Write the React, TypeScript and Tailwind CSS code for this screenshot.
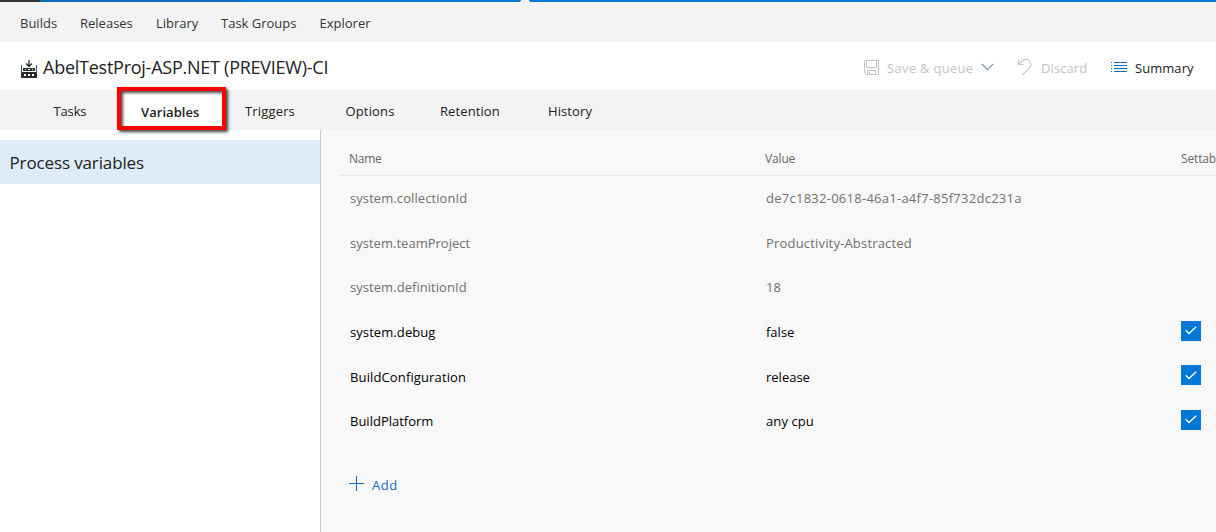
type Label = { text: string; className: string };

const hubs: Label[] = [
  { text: "Builds", className: "w-[60px]" },
  { text: "Releases", className: "w-[76px]" },
  { text: "Library", className: "w-[65px]" },
  { text: "Task Groups", className: "w-[98.5px]" },
  { text: "Explorer", className: "" },
];

const tabs: Label[] = [
  { text: "Tasks", className: "w-[87.5px] tracking-[-0.15px]" },
  { text: "Variables", className: "w-[104px] font-semibold tracking-[0.05px] pt-px" },
  { text: "Triggers", className: "w-[100.5px] tracking-[0.16px]" },
  { text: "Options", className: "w-[94.5px] tracking-[0.15px]" },
  { text: "Retention", className: "w-[108px] tracking-[0.1px]" },
  { text: "History", className: "tracking-[0.1px]" },
];

type Variable = { name: Label; value: Label; editable: boolean };

const variables: Variable[] = [
  {
    name: { text: "system.collectionId", className: "tracking-[0.08px]" },
    value: { text: "de7c1832-0618-46a1-a4f7-85f732dc231a", className: "tracking-[0.26px]" },
    editable: false,
  },
  {
    name: { text: "system.teamProject", className: "tracking-[0.02px]" },
    value: { text: "Productivity-Abstracted", className: "tracking-[0.18px]" },
    editable: false,
  },
  {
    name: { text: "system.definitionId", className: "tracking-[0.05px]" },
    value: { text: "18", className: "" },
    editable: false,
  },
  {
    name: { text: "system.debug", className: "tracking-[0.08px]" },
    value: { text: "false", className: "" },
    editable: true,
  },
  {
    name: { text: "BuildConfiguration", className: "tracking-[0.13px]" },
    value: { text: "release", className: "" },
    editable: true,
  },
  {
    name: { text: "BuildPlatform", className: "" },
    value: { text: "any cpu", className: "tracking-[0.1px]" },
    editable: true,
  },
];

function BuildIcon() {
  return (
    <svg width="16" height="18" viewBox="0 0 16 18" className="shrink-0">
      <path d="M8 0V6M5 3.5L8 6.5L11 3.5" stroke="#2b2b2b" strokeWidth="1.3" fill="none" />
      <path
        fillRule="evenodd"
        fill="#2b2b2b"
        d="M2 8H14V11H2ZM4 9V10H5V9ZM7 9V10H9V9ZM11 9V10H12V9ZM0 12H16V18H0ZM3 14V16H5V14ZM7 14V16H9V14ZM11 14V16H13V14Z"
      />
      <path d="M0.5 5V13M15.5 5V13" stroke="#2f5f86" strokeWidth="1" />
    </svg>
  );
}

function SaveIcon() {
  return (
    <svg width="15" height="15" viewBox="0 0 15 15" fill="none" stroke="#c4c4c4" className="shrink-0">
      <path d="M0.5 0.5H14.5V14.5H2.5L0.5 12.5Z" />
      <path d="M2.5 0.5V7.5H12.5V0.5M3.5 14.5V10.5H11.5V14.5M5.5 12V14.5" />
    </svg>
  );
}

function UndoIcon() {
  return (
    <svg width="14" height="17" viewBox="0 0 14 17" fill="none" stroke="#c4c4c4" strokeWidth="1.1" className="shrink-0">
      <path d="M0.6 0.5V5.5H5.6" />
      <path d="M0.8 5.2L4 2.2C6.5 0.2 9.3 0.1 11.2 1.8C13.4 3.8 13.3 6.8 11.4 8.9L4.2 16.2" />
    </svg>
  );
}

function SummaryIcon() {
  return (
    <svg width="17" height="11" viewBox="0 0 17 11" fill="none" stroke="#106ebe" className="shrink-0" shapeRendering="crispEdges">
      <path d="M0 0.5H1M3 0.5H16M0 3.5H1M3 3.5H16M0 6.5H1M3 6.5H16M0 9.5H1M3 9.5H16" />
    </svg>
  );
}

function Checkbox() {
  return (
    <span className="-mt-[2.6px] flex size-5 shrink-0 items-center justify-center bg-[#0078d7]">
      <svg width="12" height="9" viewBox="0 0 12 9" fill="none" stroke="#fff" strokeWidth="1.3">
        <path d="M0.7 4.2L4 7.5L11.2 0.8" />
      </svg>
    </span>
  );
}

export default function App() {
  return (
    <div className="flex h-[532px] w-[1216px] flex-col overflow-hidden bg-white font-['Open_Sans','Noto_Sans',sans-serif] text-[13px] leading-5 whitespace-nowrap text-[#222]">
      <div className="flex h-0.5 shrink-0 bg-[#f3f3f3]">
        <div className="w-10 bg-[#333]" />
        <div className="w-[200px] bg-[#106ebe]" />
        <div className="w-[281px] rounded-br-[2px] bg-[#0078d7]" />
        <div className="ml-2 flex-1 rounded-bl-[2px] bg-[#0078d7]" />
      </div>

      <nav className="flex h-10 shrink-0 items-center bg-[#f3f3f3] pt-0.5 pl-5 text-[#333]">
        {hubs.map((hub) => (
          <a key={hub.text} className={hub.className}>{hub.text}</a>
        ))}
      </nav>

      <header className="flex h-12 shrink-0 items-center justify-between pl-[21px]">
        <div className="flex items-center">
          <div className="pt-1.5">
            <BuildIcon />
          </div>
          <h1 className="ml-1.5 pt-0.5 text-[18px] leading-6 tracking-[-0.25px]">AbelTestProj-ASP.NET (PREVIEW)-CI</h1>
        </div>
        <div className="flex w-[352px] items-center pt-1 text-[#c4c4c4]">
          <div className="flex w-[154px] items-center">
            <div className="-mt-0.5">
              <SaveIcon />
            </div>
            <span className="ml-2 tracking-[0.3px]">Save &amp; queue</span>
            <svg width="13" height="8" viewBox="0 0 13 8" fill="none" stroke="#7a8ba0" strokeWidth="1.1" className="-mt-0.5 ml-2">
              <path d="M0.7 0.8L6.5 6.6L12.3 0.8" />
            </svg>
          </div>
          <div className="flex w-[93px] items-center">
            <div className="-mt-0.5">
              <UndoIcon />
            </div>
            <span className="ml-[9px] tracking-[0.1px]">Discard</span>
          </div>
          <div className="flex items-center text-[#222]">
            <div className="-mt-0.5">
              <SummaryIcon />
            </div>
            <span className="ml-[7px] tracking-[0.05px]">Summary</span>
          </div>
        </div>
      </header>

      <div className="relative flex h-10 shrink-0 items-center bg-[#f3f3f3] pt-0.5 pl-[53.5px]">
        <div className="absolute -top-[3px] left-[117px] h-[43px] w-[109px] border-4 border-[#fe0000] bg-white shadow-[2px_2px_3px_rgba(0,0,0,0.75),inset_2px_2px_3px_rgba(0,0,0,0.7)]" />
        {tabs.map((tab) => (
          <a key={tab.text} className={`relative ${tab.className}`}>{tab.text}</a>
        ))}
      </div>

      <div className="flex min-h-0 flex-1">
        <aside className="w-[321px] shrink-0 border-r border-[#c8c8c8] pt-2.5">
          <div className="flex h-11 items-center bg-[#deecf9] pt-0.5 pl-[9.5px] text-[17px] tracking-[-0.13px]">Process variables</div>
        </aside>

        <main className="min-w-0 flex-1 bg-[#f8f8f8] pl-5">
          <div className="flex h-[46px] items-center border-b border-[#e6e6e6] pt-3 pl-2 text-[12px] text-[#666]">
            <span className="w-[416px] shrink-0 tracking-[-0.25px]">Name</span>
            <span className="w-[416px] shrink-0 tracking-[-0.15px]">Value</span>
            <span className="tracking-[-0.15px]">Settab</span>
          </div>
          {variables.map((v) => (
            <div
              key={v.name.text}
              className={`flex h-[44.58px] items-center pl-[9px] ${v.editable ? "text-black" : "text-[#707070]"}`}
            >
              <span className={`w-[416px] shrink-0 ${v.name.className}`}>{v.name.text}</span>
              <span className={`w-[415px] shrink-0 ${v.value.className}`}>{v.value.text}</span>
              {v.editable && <Checkbox />}
            </div>
          ))}
          <button className="mt-[31.5px] ml-2 flex items-center text-[#106ebe]">
            <svg width="15" height="15" viewBox="0 0 15 15" stroke="#106ebe" className="-mt-[3px]" shapeRendering="crispEdges">
              <path d="M7.5 0V15M0 7.5H15" />
            </svg>
            <span className="ml-2 tracking-[0.5px]">Add</span>
          </button>
        </main>
      </div>
    </div>
  );
}
